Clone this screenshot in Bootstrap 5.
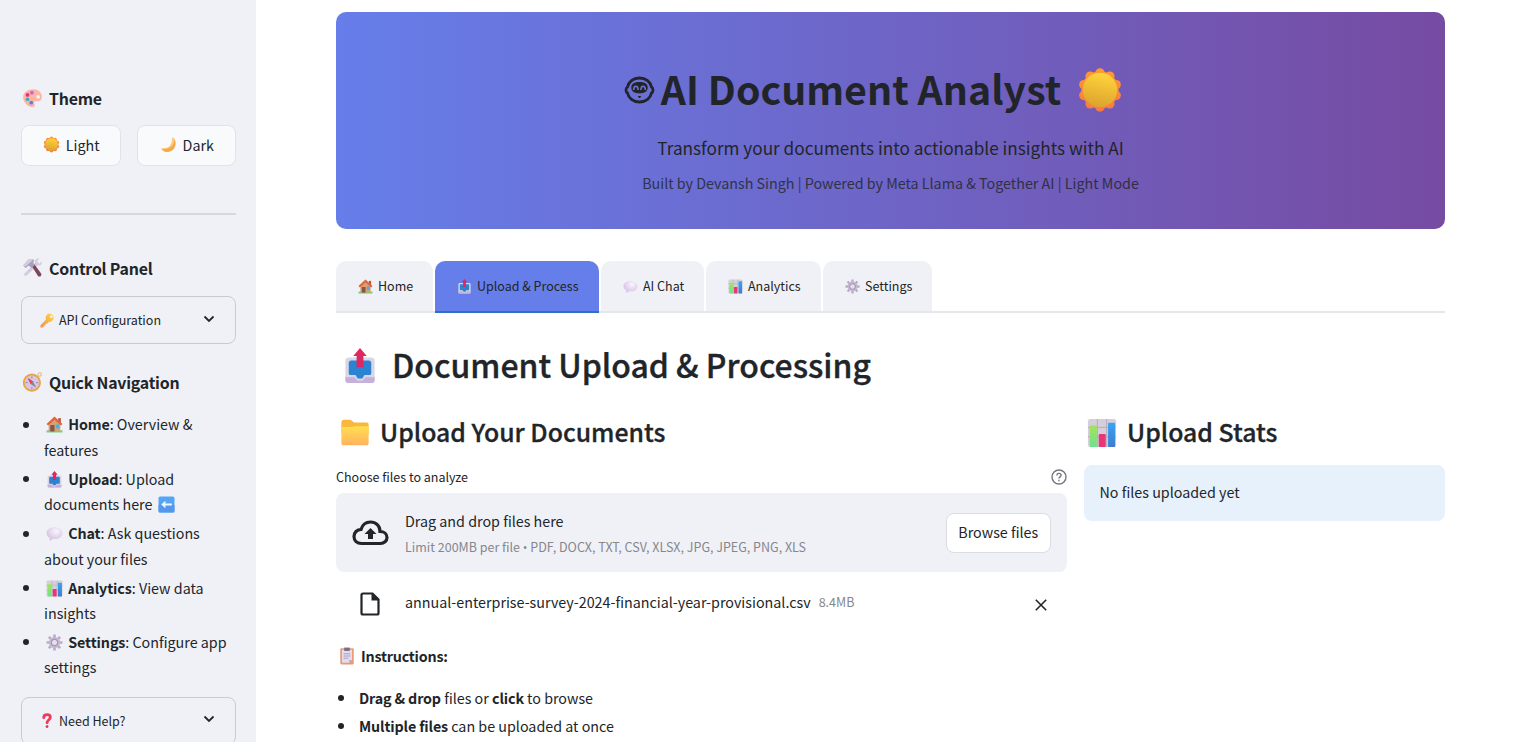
<!DOCTYPE html>
<html lang="en">
<head>
<meta charset="utf-8">
<meta name="viewport" content="width=device-width, initial-scale=1">
<title>AI Document Analyst</title>
<link href="https://cdn.jsdelivr.net/npm/bootstrap@5.3.0/dist/css/bootstrap.min.css" rel="stylesheet">
<style>
  :root { --ink:#212529; --panel:#f0f1f6; }
  html, body { height:100%; overflow:hidden; }
  body { font-family:"Noto Sans CJK SC","Noto Sans",sans-serif; font-size:14.3px; line-height:25.6px; color:var(--ink); background:#fff; }
  h1,h2,h3,p,ul { margin:0; }
  svg { flex:none; display:block; }
  .side { width:256px; background:var(--panel); padding:87px 20px 0 21px; }
  .side-title { font-size:15.9px; line-height:22px; font-weight:600; height:22px; padding:1px 0 0 1px; gap:6px; letter-spacing:-.22px; }
  .side-title svg { margin-top:-1px; }
  .theme-btn { flex:1 1 0; height:41px; border:1px solid #e1e3e8; border-radius:8px; background:#f9fafc; font-size:14.3px; line-height:20px; color:var(--ink); gap:6px; padding:0 0 2px 1px; }
  .side-rule { height:2px; background:#d6d8dd; margin-top:47px; }
  .expander { height:48px; border:1px solid #c9cbd0; border-radius:8px; font-size:12.5px; padding:0 20px 0 18px; }
  .expander .chevron { margin-bottom:3px; }
  .bullets { list-style:none; padding:0; }
  .bullets li { position:relative; }
  .bullets li::before { content:""; position:absolute; width:6px; height:6px; border-radius:50%; background:var(--ink); top:10px; }
  .side .bullets li { padding-left:23px; margin-bottom:3.2px; }
  .side .bullets li::before { left:2px; top:10.5px; }
  .bullets svg { display:inline-block; vertical-align:-3px; margin:0 2px; }
  .bullets b { font-weight:600; letter-spacing:-.1px; }
  .content-area { padding:12px 91px 0 80px; min-width:0; }
  .hero { height:216.5px; border-radius:10px; background:linear-gradient(90deg,#667eea,#764ba2); padding-top:49px; }
  .hero h1 { font-size:39.3px; font-weight:700; line-height:56px; height:56px; padding-right:34px; }
  .hero h1 svg { margin-top:1px; }
  .hero-name { margin-top:-2px; }
  .hero-sub { font-size:17.2px; line-height:28px; margin-top:16.5px; }
  .hero-by { font-size:14.3px; line-height:24px; margin-top:9.5px; opacity:.8; }
  .tabs { margin-top:32px; height:52px; gap:2px; border-bottom:2px solid #e6e7eb; font-size:12.5px; }
  .tab-item { height:52px; border-radius:10px 10px 0 0; background:var(--panel); padding:1px 0 0 22px; gap:5px; border-bottom:2px solid #e6e7eb; white-space:nowrap; }
  .tab-item.current { background:#667eea; border-color:#2f6fc4; }
  .page-title { font-size:31.95px; font-weight:500; line-height:44px; height:44px; margin-top:31px; padding-left:6px; gap:14px; -webkit-text-stroke:.35px var(--ink); }
  .page-title span { margin-top:-3px; }
  .sub-title { font-size:24.8px; font-weight:500; line-height:36px; height:36px; gap:10px; -webkit-text-stroke:.3px var(--ink); }
  .sub-title span { margin-top:-3px; }
  .col-files { width:731px; margin-right:16.5px; }
  .drop { height:79px; border-radius:8px; background:var(--panel); padding:0 16px; }
  .browse { height:40px; width:105.5px; border:1px solid #dcdde1; border-radius:8px; background:#fff; font-size:14.3px; line-height:1; color:var(--ink); padding:0; margin-top:1px; }
  .muted { color:#85878d; font-size:12.5px; }
  .dot { font-family:"Open Sans","Noto Sans",sans-serif; }
  .notice { height:56px; border-radius:8px; background:#e7f1fc; padding:0 16px 1px; margin-top:14px; }
  .howto li { padding-left:23px; margin-bottom:3.2px; }
  .howto li::before { left:2px; }
  .howto b { letter-spacing:-.14px; }
</style>
</head>
<body>
<svg width="0" height="0" class="position-absolute" aria-hidden="true">
  <defs>
    <linearGradient id="gSun" x1=".6" y1="0" x2=".4" y2="1"><stop offset="0" stop-color="#ffd53b"/><stop offset="1" stop-color="#dda12f"/></linearGradient>
    <linearGradient id="gRay" gradientUnits="userSpaceOnUse" x1="0" y1="0" x2="0" y2="32"><stop offset="0" stop-color="#ff9c2e"/><stop offset="1" stop-color="#f97744"/></linearGradient>
    <linearGradient id="gFold" x1="0" y1="0" x2="0" y2="1"><stop offset="0" stop-color="#ffdf4f"/><stop offset="1" stop-color="#ffb35f"/></linearGradient>
    <linearGradient id="gGreen" x1="0" y1="0" x2="0" y2="1"><stop offset="0" stop-color="#a5e35b"/><stop offset="1" stop-color="#6fe08d"/></linearGradient>
    <linearGradient id="gBlue" x1="0" y1="0" x2="0" y2="1"><stop offset="0" stop-color="#38a5f5"/><stop offset="1" stop-color="#3f7bd0"/></linearGradient>
    <linearGradient id="gKey" x1="1" y1="0" x2="0" y2="1"><stop offset="0" stop-color="#ffd83c"/><stop offset="1" stop-color="#f98d4f"/></linearGradient>
    <radialGradient id="gBub" cx=".6" cy=".3" r=".8"><stop offset="0" stop-color="#faf5fc"/><stop offset="1" stop-color="#cdb8de"/></radialGradient>
  </defs>
  <symbol id="sun" viewBox="0 0 32 32">
    <g fill="url(#gRay)"><circle cx="16" cy="4.200" r="3.300"/><circle cx="16" cy="27.800" r="3.300"/><circle cx="22.800" cy="6.400" r="3.300"/><circle cx="9.200" cy="6.400" r="3.300"/><circle cx="22.800" cy="25.600" r="3.300"/><circle cx="9.200" cy="25.600" r="3.300"/><circle cx="27.200" cy="12.300" r="3.300"/><circle cx="4.800" cy="12.300" r="3.300"/><circle cx="27.200" cy="19.700" r="3.300"/><circle cx="4.800" cy="19.700" r="3.300"/><circle cx="16" cy="16" r="13"/></g>
    <circle cx="16" cy="16" r="12" fill="url(#gSun)"/>
  </symbol>
  <symbol id="moon" viewBox="0 0 32 32">
    <path d="M23 2c9 6 8 19 0 25-7 5-17 4-21-4 8 1 15-1 18-7 3-5 2-10 3-14z" fill="#ffcc79"/><path d="M3 24c9 2 18-1 22-9 2-4 2-8 1-11 5 7 4 17-3 23-7 5-16 4-20-3z" fill="#f6a948"/>
  </symbol>
  <symbol id="palette" viewBox="0 0 32 32">
    <path fill-rule="evenodd" d="M17 2C8 2 1 7 1 15c0 8 8 15 14 15 5 0 5-3 4-5-1-3 1-5 4-4 4 1 8-1 8-7C31 6 24 2 17 2zm8 9a3 3 0 110 6 3 3 0 010-6z" fill="#ffb5a3"/><path d="M6 24c4 5 12 7 14 4 1 3-10 3-14-4z" fill="#ed9381"/>
    <circle cx="15" cy="7.500" r="3" fill="#c763d8"/><circle cx="8" cy="11" r="3" fill="#df3678"/><circle cx="8" cy="18" r="3" fill="#4aacb0"/><circle cx="14" cy="23.500" r="3" fill="#5a80e4"/>
  </symbol>
  <symbol id="tools" viewBox="0 0 32 32">
    <path d="M5 29l-3-3L20 8c-1-4 2-8 7-7l-4 4 4 4 4-4c1 5-3 8-7 7z" fill="#d3cbdf"/>
    <path d="M15 13l4-3 11 15c1 3-2 6-5 4z" fill="#7c4657"/><path d="M1 12l9-10c4-1 8 0 9 2l-2 3 3 4-6 5-4-4-5 4z" fill="#aaa1b8"/><path d="M1 12l9-10c3-1 6 0 7 1l-7 6-5 5z" fill="#d3cddd"/>
  </symbol>
  <symbol id="key" viewBox="0 0 32 32">
    <path fill-rule="evenodd" d="M21 1a9 9 0 00-8 13L1 26v5h6l1-4h3l1-4h3l4-4a9 9 0 102-18zm3 4a3 3 0 110 6 3 3 0 010-6z" fill="url(#gKey)"/>
  </symbol>
  <symbol id="compass" viewBox="0 0 32 32">
    <circle cx="27.500" cy="4" r="2.800" fill="none" stroke="#edaf43" stroke-width="1.600"/>
    <circle cx="15" cy="17" r="13" fill="#d7c7e1" stroke="#e9a444" stroke-width="3"/><path d="M9 9l8 6 5 10-9-6z" fill="#8d8297"/><path d="M8 10l9 5-4 4z" fill="#ef4058"/><path d="M15 7v3M15 24v3M5 17h3M22 17h3" stroke="#8d7d9c" stroke-width="1.500"/>
  </symbol>
  <symbol id="house" viewBox="0 0 32 32">
    <path d="M1 27h30v4H1z" fill="#6fd07d"/><path d="M5 14L16 5l11 9v15H5z" fill="#d7a16f"/><path d="M23 4h5v9h-5z" fill="#b45a3d"/><path d="M16 1L1 15l3 3L16 7l12 11 3-3z" fill="#e0633f"/><path d="M8 17h8v12H8z" fill="#82584d"/><path d="M19 16h6v7h-6z" fill="#38b3ed"/>
  </symbol>
  <symbol id="outbox" viewBox="0 0 32 32">
    <rect x="3" y="8.500" width="26" height="22.500" rx="3" fill="#dad6e4"/><path d="M3 26h8l3 3h4l3-3h8v3a2 2 0 01-2 2H5a2 2 0 01-2-2z" fill="#c6b1dc"/><path d="M8 11h16c1 0 2 1 2 2v9c0 2-1 2-2 2h-4l-2 3h-4l-2-3H8c-1 0-2 0-2-2v-9c0-1 1-2 2-2z" fill="#2b83d2"/><path d="M16 0l6 7h-3v10h-6V7h-3z" fill="#dd2861"/>
  </symbol>
  <symbol id="bubble" viewBox="0 0 32 32">
    <path d="M16 4C7 4 1 9 1 15c0 4 2 7 6 9v6l6-4c11 2 18-4 18-11C31 9 25 4 16 4z" fill="url(#gBub)"/>
  </symbol>
  <symbol id="chart" viewBox="0 0 32 32">
    <rect x="1" y="1" width="30" height="30" rx="2.500" fill="#d4cfdb"/><path d="M1 10h30M1 20h30M11 1v30M21 1v30" stroke="#b2acba"/>
    <rect x="3" y="8" width="7.500" height="23" rx="1" fill="url(#gGreen)"/><rect x="12.500" y="17" width="7.500" height="14" rx="1" fill="#e93775"/><rect x="22.500" y="5" width="7.500" height="26" rx="1" fill="url(#gBlue)"/>
  </symbol>
  <symbol id="gear" viewBox="0 0 32 32">
    <g stroke="#b9abc9" stroke-width="5"><path d="M16 1v30M1 16h30M5.400 5.400l21.200 21.200M26.600 5.400L5.400 26.600"/></g><circle cx="16" cy="16" r="10.500" fill="#c3b7d1"/><circle cx="16" cy="16" r="6" fill="#e5dfec" stroke="#8f819f" stroke-width="1.800"/>
  </symbol>
  <symbol id="back" viewBox="0 0 32 32">
    <rect x="1" y="1" width="30" height="30" rx="3" fill="#55a5f4"/><path d="M1 17h30v11c0 2-1 3-3 3H4c-2 0-3-1-3-3z" fill="#5398ec"/><path d="M14 9l-8 7 8 7v-5h12v-4H14z" fill="#f3f6fb"/>
  </symbol>
  <symbol id="question" viewBox="0 0 32 32">
    <path d="M8 10c0-9 14-8 14-1 0 6-7 6-7 12" fill="none" stroke="#ed3a5f" stroke-width="6" stroke-linecap="round"/><circle cx="15" cy="29" r="3" fill="#df2c56"/>
  </symbol>
  <symbol id="folder" viewBox="0 0 32 32">
    <path d="M1 5c0-2 1-3 3-3h7l4 3h14c1 0 2 1 2 2v10H1z" fill="#f8b83c"/><path d="M1 10h12l2-1h16v19c0 1-1 2-2 2H3c-1 0-2-1-2-2z" fill="url(#gFold)"/>
  </symbol>
  <symbol id="clip" viewBox="0 0 32 32">
    <rect x="4" y="2" width="24" height="29" rx="2" fill="#e79a73"/><path d="M7 5h18v18l-5 5H7z" fill="#e4dbee"/><path d="M20 28v-5h5z" fill="#b9a6ca"/><path d="M11 1h10v6H11z" fill="#776e84"/><path d="M10 12h12M10 16h12M10 20h8" stroke="#aa9dbb" stroke-width="1.700"/>
  </symbol>
  <symbol id="chev" viewBox="0 0 12 8"><path d="M1.500 1.500L6 6l4.500-4.500" fill="none" stroke="#212529" stroke-width="1.800"/></symbol>
</svg>

<div class="d-flex h-100">
  <aside class="side h-100 flex-shrink-0">
    <h3 class="side-title d-flex align-items-center"><svg width="21" height="20"><use href="#palette"/></svg>Theme</h3>
    <div class="d-flex" style="gap:16px;margin-top:16px">
      <button class="btn theme-btn d-flex align-items-center justify-content-center"><svg width="17" height="17"><use href="#sun"/></svg>Light</button>
      <button class="btn theme-btn d-flex align-items-center justify-content-center"><svg width="17" height="17"><use href="#moon"/></svg>Dark</button>
    </div>
    <div class="side-rule"></div>
    <h3 class="side-title d-flex align-items-center" style="margin-top:42px"><svg width="21" height="20"><use href="#tools"/></svg>Control Panel</h3>
    <div class="expander d-flex align-items-center" style="margin-top:17px"><svg width="15" height="15" class="me-1"><use href="#key"/></svg><span>API Configuration</span><svg width="12" height="8" class="ms-auto chevron"><use href="#chev"/></svg></div>
    <h3 class="side-title d-flex align-items-center" style="margin-top:27px"><svg width="21" height="20"><use href="#compass"/></svg>Quick Navigation</h3>
    <ul class="bullets" style="margin-top:18.4px">
      <li><svg width="17" height="17"><use href="#house"/></svg> <b>Home</b>: Overview &amp;<br>features</li>
      <li><svg width="17" height="17"><use href="#outbox"/></svg> <b>Upload</b>: Upload<br>documents here <svg width="17" height="17"><use href="#back"/></svg></li>
      <li><svg width="17" height="17"><use href="#bubble"/></svg> <b>Chat</b>: Ask questions<br>about your files</li>
      <li><svg width="17" height="17"><use href="#chart"/></svg> <b>Analytics</b>: View data<br>insights</li>
      <li><svg width="17" height="17"><use href="#gear"/></svg> <b>Settings</b>: Configure app<br>settings</li>
    </ul>
    <div class="expander d-flex align-items-center" style="margin-top:16.600px"><svg width="15" height="15" class="me-1"><use href="#question"/></svg><span>Need Help?</span><svg width="12" height="8" class="ms-auto chevron"><use href="#chev"/></svg></div>
  </aside>

  <main class="content-area flex-fill">
    <header class="hero text-center">
      <h1 class="d-flex align-items-center justify-content-center">
        <svg width="31" height="28" viewBox="0 0 31 28" style="margin-right:6px"><path d="M15.500 2C9 2 4.500 6 3.500 11c-2 1-2 5 0 6 1 5 5.500 9 12 9s11-4 12-9c2-1 2-5 0-6-1-5-5.500-9-12-9z" fill="none" stroke="#212529" stroke-width="2.800"/><path d="M7.300 11.500c0-4 3.400-5.500 8.200-5.500s8.200 1.500 8.200 5.500-3.200 5.800-8.200 5.800-8.200-1.800-8.200-5.800z" fill="#212529"/><path d="M9.600 14c.3-5 4.300-5 4.600 0m2.600 0c.3-5 4.300-5 4.600 0" fill="none" stroke="#7073d4" stroke-width="1.500"/><path d="M13.800 20h3.400l-1 1.900h-1.400z" fill="#212529"/></svg>
        <span class="hero-name">AI Document Analyst</span>
        <svg width="46" height="46" style="margin-left:16px"><use href="#sun"/></svg>
      </h1>
      <p class="hero-sub">Transform your documents into actionable insights with AI</p>
      <p class="hero-by">Built by Devansh Singh | Powered by Meta Llama &amp; Together AI | Light Mode</p>
    </header>

    <nav class="tabs d-flex">
      <div class="tab-item d-flex align-items-center" style="width:97px"><svg width="15" height="15"><use href="#house"/></svg>Home</div>
      <div class="tab-item current d-flex align-items-center" style="width:164px"><svg width="15" height="15"><use href="#outbox"/></svg>Upload &amp; Process</div>
      <div class="tab-item d-flex align-items-center" style="width:103px"><svg width="15" height="15"><use href="#bubble"/></svg>AI Chat</div>
      <div class="tab-item d-flex align-items-center" style="width:115px"><svg width="15" height="15"><use href="#chart"/></svg>Analytics</div>
      <div class="tab-item d-flex align-items-center" style="width:109px"><svg width="15" height="15"><use href="#gear"/></svg>Settings</div>
    </nav>

    <h1 class="page-title d-flex align-items-center"><svg width="36" height="36"><use href="#outbox"/></svg><span>Document Upload &amp; Processing</span></h1>

    <div class="d-flex" style="margin-top:27px">
      <section class="col-files flex-shrink-0">
        <h2 class="sub-title d-flex align-items-center" style="padding-left:4px"><svg width="30" height="29"><use href="#folder"/></svg><span>Upload Your Documents</span></h2>
        <div class="d-flex align-items-center justify-content-between" style="font-size:12.5px;height:22px;margin-top:15px"><span>Choose files to analyze</span>
          <svg width="16" height="16" viewBox="0 0 16 16" fill="none" stroke="#73767c" stroke-width="1.400"><circle cx="8" cy="8" r="7"/><path d="M5.900 6.500c0-3 4.200-2.700 4.200-.2 0 1.500-2.100 1.600-2.100 3.200M8 10.800v1.500"/></svg></div>
        <div class="drop d-flex align-items-center" style="margin-top:5px">
          <svg width="37" height="26" viewBox="0 0 37 26" style="margin-top:2px"><path d="M9.500 23.500c-4.500 0-7.500-3-7.500-7 0-4 3-7 7-7 1.500-5 5-7.500 9.500-7.500 5.500 0 9.500 4 9.500 9.500 4 0 7 2.500 7 6s-3 6-6.500 6z" fill="none" stroke="#212529" stroke-width="3.200"/><path d="M18.500 8l6 6H21v5h-5v-5h-3.500z" fill="#212529"/></svg>
          <div style="margin-left:16px;padding-top:5px"><div>Drag and drop files here</div><div class="muted">Limit 200MB per file <span class="dot">•</span> PDF, DOCX, TXT, CSV, XLSX, JPG, JPEG, PNG, XLS</div></div>
          <button class="btn browse ms-auto">Browse files</button>
        </div>
        <div class="d-flex align-items-center" style="height:26px;margin-top:17px;padding:0 20px 0 24px">
          <svg width="20" height="24" viewBox="0 0 20 24" style="margin-top:4px"><path d="M3 1.500h9.500l6 6V21c0 .8-.7 1.500-1.500 1.500H3c-.8 0-1.500-.7-1.500-1.500V3c0-.8.7-1.500 1.500-1.500z" fill="none" stroke="#212529" stroke-width="2.200"/><path d="M11.500 1.500v7H19z" fill="#212529"/></svg>
          <span style="margin-left:25px">annual-enterprise-survey-2024-financial-year-provisional.csv</span><span class="muted" style="margin:1px 0 0 8px">8.4MB</span>
          <svg width="12" height="12" viewBox="0 0 12 12" class="ms-auto" style="margin-top:6px"><path d="M.8.8l10.400 10.400M11.200.8L.8 11.200" stroke="#212529" stroke-width="1.600"/></svg>
        </div>
        <div class="d-flex align-items-center" style="height:26px;margin-top:28px;padding-left:2px;gap:5px"><svg width="18" height="18"><use href="#clip"/></svg><b style="font-weight:600;letter-spacing:-.22px">Instructions:</b></div>
        <ul class="bullets howto" style="margin-top:16px">
          <li><b>Drag &amp; drop</b> files or <b>click</b> to browse</li>
          <li><b>Multiple files</b> can be uploaded at once</li>
        </ul>
      </section>
      <section class="flex-fill">
        <h2 class="sub-title d-flex align-items-center" style="padding-left:3.500px"><svg width="30" height="30"><use href="#chart"/></svg><span>Upload Stats</span></h2>
        <div class="notice d-flex align-items-center">No files uploaded yet</div>
      </section>
    </div>
  </main>
</div>
<script src="https://cdn.jsdelivr.net/npm/bootstrap@5.3.0/dist/js/bootstrap.bundle.min.js"></script>
</body>
</html>
